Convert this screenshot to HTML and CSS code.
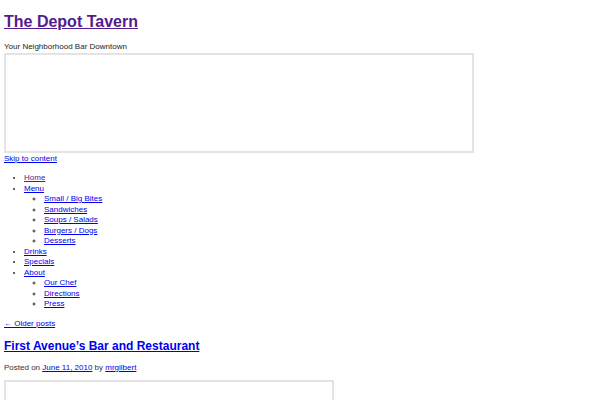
FILE: index.html
```html
<!DOCTYPE html>
<html lang="en">
<head>
    <meta charset="UTF-8">
    <title>The Depot Tavern | Your Neighborhood Bar Downtown</title>
    <link rel="stylesheet" href="styles.css">
</head>
<body>
    <div id="header">
        <h1 class="site-title"><a class="visited" href="#">The Depot Tavern</a></h1>
        <div class="site-description">Your Neighborhood Bar Downtown</div>
        <div class="header-image"></div>
    </div>

    <div class="skip-link"><a href="#content">Skip to content</a></div>

    <ul class="menu">
        <li><a class="visited" href="#">Home</a></li>
        <li><a href="#">Menu</a>
            <ul class="sub-menu">
                <li><a href="#">Small / Big Bites</a></li>
                <li><a href="#">Sandwiches</a></li>
                <li><a href="#">Soups / Salads</a></li>
                <li><a href="#">Burgers / Dogs</a></li>
                <li><a href="#">Desserts</a></li>
            </ul>
        </li>
        <li><a href="#">Drinks</a></li>
        <li><a href="#">Specials</a></li>
        <li><a href="#">About</a>
            <ul class="sub-menu">
                <li><a href="#">Our Chef</a></li>
                <li><a href="#">Directions</a></li>
                <li><a href="#">Press</a></li>
            </ul>
        </li>
    </ul>

    <div id="content">
        <div class="nav-previous"><a href="#">&larr; Older posts</a></div>

        <div class="post">
            <h2 class="entry-title"><a href="#">First Avenue&rsquo;s Bar and Restaurant</a></h2>
            <div class="entry-meta">
                Posted on <a href="#">June 11, 2010</a> by <a href="#">mrgilbert</a>
            </div>
            <div class="entry-content">
                <div class="post-image"></div>
            </div>
        </div>
    </div>
</body>
</html>
```

FILE: styles.css
```css
body {
    margin: 4px;
    padding: 0;
    font-family: "Liberation Sans", Arial, sans-serif;
    font-size: 8px;
    line-height: 10.5px;
    color: #333;
    background: #fff;
}
a {
    color: #0000ee;
}
a.visited {
    color: #551a8b;
}
.site-title {
    font-size: 16px;
    line-height: 19px;
    margin: 8px 0 11px;
}
.site-description {
    color: #222;
}
.header-image {
    width: 470px;
    height: 100px;
    box-sizing: border-box;
    border: 2px solid #e4e4e4;
}
.skip-link {
    margin-top: 1px;
}
.menu {
    margin: 9px 0;
    padding-left: 20px;
}
.sub-menu {
    margin: 0;
    padding-left: 20px;
    list-style: circle;
}
.entry-title {
    font-size: 12px;
    line-height: 14px;
    margin: 10px 0;
}
.entry-meta {
    margin-bottom: 6px;
}
.post-image {
    width: 330px;
    height: 60px;
    box-sizing: border-box;
    border: 2px solid #e4e4e4;
}
```
